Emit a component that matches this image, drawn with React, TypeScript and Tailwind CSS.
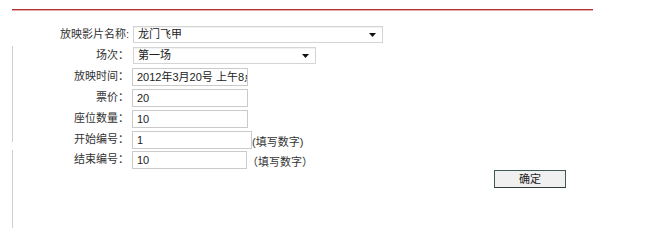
const FONT = "font-['Liberation_Sans','Noto_Sans_CJK_SC',sans-serif]";

function Arrow() {
  return (
    <svg width="7" height="4" viewBox="0 0 7 4" className="shrink-0">
      <path d="M0 0H7L3.5 4Z" fill="#111" />
    </svg>
  );
}

function Label({ children }: { children: React.ReactNode }) {
  return (
    <div className="w-[118px] shrink-0 pr-[2px] text-right text-[11px] leading-[17px] text-[#333]">
      {children}
    </div>
  );
}

function Select({ value, width }: { value: string; width: string }) {
  return (
    <div
      className={`ml-[2px] flex h-[17px] items-center justify-between border border-[#d4d4d4] bg-white pl-[4px] pr-[6px] text-[11px] text-[#222] shadow-[inset_0_1px_1px_rgba(0,0,0,0.06)] ${width}`}
    >
      <span>{value}</span>
      <Arrow />
    </div>
  );
}

function Input({ value, width }: { value: string; width: string }) {
  return (
    <div
      className={`ml-[1px] flex h-[18px] items-center overflow-hidden whitespace-nowrap border border-[#cacaca] bg-white pl-[4px] text-[11px] text-[#222] ${width}`}
    >
      {value}
    </div>
  );
}

export default function App() {
  return (
    <div className={`h-[228px] w-[645px] overflow-hidden bg-white ${FONT}`}>
      <div className="ml-[12px] mt-[9px] w-[581px] border-t border-b border-t-[#b03434] border-b-[#e6a9a9]" />
      <div className="flex">
        <div className="ml-[12px] flex w-px flex-col pt-[35px]">
          <div className="h-[96px] bg-[#cfcfcf]" />
          <div className="h-[8px]" />
          <div className="h-[90px] bg-[#cfcfcf]" />
        </div>

        <div className="mt-[15px] flex flex-col">
          <div className="flex h-[21px] items-start">
            <Label>放映影片名称:</Label>
            <Select value="龙门飞甲" width="w-[250px]" />
          </div>
          <div className="flex h-[21px] items-start">
            <Label>场次：</Label>
            <Select value="第一场" width="w-[183px]" />
          </div>
          <div className="flex h-[21px] items-start">
            <Label>放映时间：</Label>
            <Input value="2012年3月20号 上午8点" width="w-[116px]" />
          </div>
          <div className="flex h-[21px] items-start">
            <Label>票价：</Label>
            <Input value="20" width="w-[116px]" />
          </div>
          <div className="flex h-[21px] items-start">
            <Label>座位数量：</Label>
            <Input value="10" width="w-[116px]" />
          </div>
          <div className="flex h-[20px] items-start">
            <Label>开始编号：</Label>
            <Input value="1" width="w-[120px]" />
            <span className="mt-[5px] text-[11px] leading-[13px] text-[#333]">(填写数字)</span>
          </div>
          <div className="flex h-[20px] items-start">
            <Label>结束编号：</Label>
            <Input value="10" width="w-[115px]" />
            <span className="mt-[5px] text-[11px] leading-[13px] text-[#333]">（填写数字）</span>
          </div>
          <div className="flex">
            <button className="ml-[481px] mt-[-1px] h-[18px] w-[72px] border border-[#3f5858] border-b-[#2a3c3c] bg-[#f0f0f0] text-[11px] leading-[16px] text-[#222]">
              确定
            </button>
          </div>
        </div>
      </div>
    </div>
  );
}
